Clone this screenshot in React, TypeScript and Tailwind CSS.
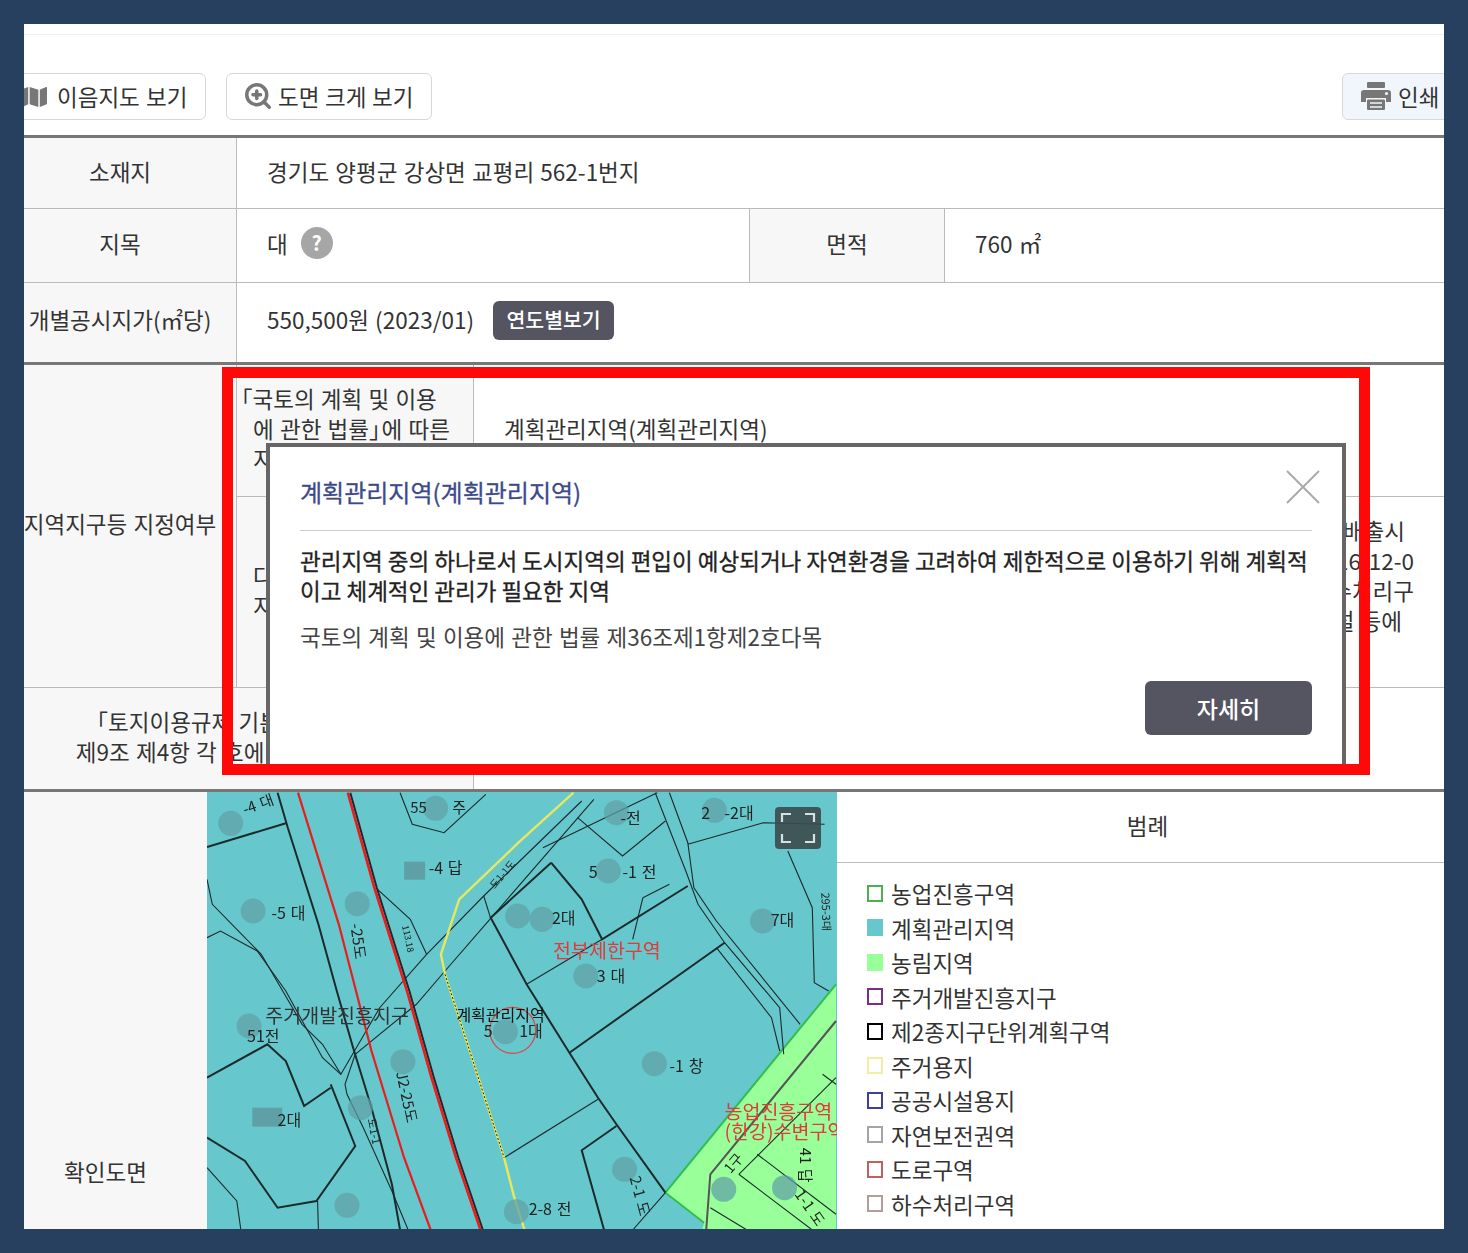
import React from "react";
import { FaMap } from "react-icons/fa";
import { ZoomIn } from "lucide-react";

const X = (z: number) => (z - 17) / 2.45;
const Y = (z: number) => (z - 3) / 3;
const pts = (a: number[]) => {
  const out: string[] = [];
  for (let i = 0; i < a.length; i += 2) out.push(`${X(a[i]).toFixed(1)},${Y(a[i + 1]).toFixed(1)}`);
  return out.join(" ");
};

const thin: number[][] = [
  [490, 5, 520, 100, 598, 125, 700, 10],
  [935, 30, 695, 315, 555, 490, 440, 650, 345, 850, 300, 760, 250, 700, 150, 490, 30, 340, 17, 265],
  [965, 25, 712, 382, 600, 540, 530, 640, 380, 790, 355, 880, 360, 910, 400, 1010, 470, 1200, 510, 1317],
  [695, 315, 712, 382],
  [800, 580, 985, 445],
  [925, 80, 1035, 195, 1140, 90],
  [840, 170, 1120, 5],
  [1195, 160, 1380, 95, 1530, 100],
  [1115, 5, 1190, 240, 1220, 340, 1285, 455, 1420, 650, 1430, 790],
  [1150, 5, 1195, 155, 1210, 290, 1265, 390, 1470, 700],
  [1265, 470, 1400, 680, 1420, 780],
  [1440, 180, 1500, 350, 1505, 575, 1540, 600],
  [430, 290, 515, 385, 555, 490],
  [975, 925, 745, 1100],
  [1085, 320, 1060, 445],
  [1085, 320, 1150, 280],
  [1140, 1205, 1060, 1317],
  [288, 1230, 290, 1317],
  [17, 440, 50, 420, 140, 480, 210, 600, 300, 800, 345, 850],
  [17, 1130, 90, 1230, 100, 1317],
  [1320, 1150, 1500, 1317],
  [1365, 1090, 1558, 1270],
  [1558, 860, 1320, 1150],
  [1525, 850, 1558, 880],
  [1250, 1250, 1340, 1317],
];
const thick: number[][] = [
  [17, 168, 210, 97],
  [190, 5, 215, 110, 290, 400, 335, 600, 375, 770, 420, 950, 470, 1180, 490, 1317],
  [860, 215, 712, 380, 800, 580, 905, 785, 975, 920, 1020, 1000, 1140, 1205],
  [860, 215, 935, 325, 985, 445, 1195, 285],
  [905, 785, 1285, 455],
  [1020, 1005, 935, 1078, 990, 1317],
  [17, 860, 165, 760, 210, 810, 255, 945, 320, 890],
  [320, 880, 380, 1065, 285, 1230, 190, 1250, 110, 1110, 17, 1040],
  [368, 5, 433, 290, 513, 600, 573, 860, 633, 1100, 693, 1317],
];
const blobs: [number, number][] = [
  [75, 97], [577, 52], [1020, 65], [1260, 58], [1000, 240], [130, 360], [385, 338], [778, 375], [838, 385],
  [1378, 390], [945, 555], [748, 722], [120, 705], [497, 812], [1113, 818], [393, 950], [1040, 1135],
  [1283, 1195], [1432, 1190], [775, 1262], [360, 1243],
];
const labels: [string, number, number, number, number, string][] = [
  ["-4 대", 110, 72, 15, -20, "#222"],
  ["55", 515, 66, 15, 0, "#222"],
  ["주", 618, 66, 15, 0, "#222"],
  ["-전", 1030, 98, 16, 0, "#222"],
  ["2", 1228, 85, 16, 0, "#222"],
  ["-2대", 1285, 85, 16, 0, "#222"],
  ["-4 답", 560, 250, 16, 0, "#222"],
  ["5", 952, 262, 16, 0, "#222"],
  ["-1 전", 1035, 262, 16, 0, "#222"],
  ["-5 대", 175, 385, 16, 0, "#222"],
  ["2대", 862, 398, 16, 0, "#222"],
  ["7대", 1398, 405, 16, 0, "#222"],
  ["3 대", 972, 572, 16, 0, "#222"],
  ["51전", 115, 752, 16, 0, "#222"],
  ["5", 695, 738, 16, 0, "#222"],
  ["1대", 782, 738, 16, 0, "#222"],
  ["-1 창", 1150, 842, 16, 0, "#222"],
  ["2대", 190, 1005, 16, 0, "#222"],
  ["2-8 전", 805, 1272, 16, 0, "#222"],
  ["-25도", 368, 400, 15, 82, "#222"],
  ["J2-25도", 480, 845, 15, 78, "#222"],
  ["113.18", 495, 405, 9, 78, "#222"],
  ["도1-1도", 722, 295, 10, -50, "#222"],
  ["295-3대", 1522, 305, 11, 88, "#222"],
  ["2-1 도", 1052, 1160, 15, 75, "#222"],
  ["41 답", 1470, 1070, 15, 90, "#222"],
  ["1-1 도", 1455, 1210, 15, 55, "#222"],
  ["1구", 1300, 1150, 14, -50, "#222"],
  ["도1-1", 410, 985, 11, 78, "#222"],
  ["전부제한구역", 865, 500, 19.5, 0, "#e03a3a"],
  ["주거개발진흥지구", 160, 695, 19.5, 0, "#333"],
  ["계획관리지역", 628, 690, 16, 0, "#111"],
  ["농업진흥구역", 1285, 985, 19.5, 0, "#e03a3a"],
  ["(한강)수변구역", 1285, 1045, 19.5, 0, "#e03a3a"],
];

function MapDrawing() {
  return (
    <svg width="630" height="438" viewBox="0 0 630 438" className="block blur-[0.4px]">
      <rect width="630" height="438" fill="#66c8cc" />
      <polygon points={pts([1558, 580, 1140, 1205, 1235, 1295, 1230, 1317, 1558, 1317])} fill="#99ff99" />
      <polyline points={pts([1558, 580, 1140, 1205, 1235, 1295])} fill="none" stroke="#2fbf4a" strokeWidth="2" />
      {thin.map((p, i) => (
        <polyline key={i} points={pts(p)} fill="none" stroke="#1c2a2c" strokeWidth="1.1" />
      ))}
      {thick.map((p, i) => (
        <polyline key={i} points={pts(p)} fill="none" stroke="#1c2a2c" strokeWidth="2" />
      ))}
      <polyline points={pts([240, 5, 340, 400, 420, 780, 500, 1100, 565, 1317])} fill="none" stroke="#e81e1e" strokeWidth="2.2" />
      <polyline points={pts([362, 5, 427, 290, 507, 600, 567, 860, 627, 1100, 687, 1317])} fill="none" stroke="#e81e1e" strokeWidth="2.6" />
      <polyline points={pts([915, 5, 780, 155, 635, 325, 590, 490, 600, 550, 745, 1100, 770, 1220, 795, 1317])} fill="none" stroke="#e8e860" strokeWidth="2.4" />
      <polyline points={pts([600, 550, 745, 1100])} fill="none" stroke="#222" strokeWidth="1" strokeDasharray="2 2" />
      <polyline points={pts([1558, 690, 1250, 1150, 1240, 1317])} fill="none" stroke="#555" strokeWidth="2" />
      <rect x={X(500)} y={Y(212)} width="21" height="18" fill="#5fa0a6" />
      <rect x={X(128)} y={Y(950)} width="30" height="19" fill="#5fa0a6" />
      {blobs.map(([x, y], i) => (
        <circle key={i} cx={X(x)} cy={Y(y)} r="12.5" fill="#5fa0a6" fillOpacity="0.72" />
      ))}
      <circle cx={X(766)} cy={Y(718)} r="23" fill="none" stroke="#d84848" strokeWidth="1.3" />
      {labels.map(([t, x, y, s, r, c], i) => (
        <text
          key={i}
          x={X(x)}
          y={Y(y)}
          fontSize={s}
          fill={c}
          transform={r ? `rotate(${r} ${X(x)} ${Y(y)})` : undefined}
        >
          {t}
        </text>
      ))}
    </svg>
  );
}

function PrinterIcon() {
  return (
    <svg width="30" height="28" viewBox="0 0 30 28" className="shrink-0">
      <rect x="6" y="0" width="18" height="6" rx="1" fill="#777" />
      <path d="M3 8H27A3 3 0 0 1 30 11V20H25V16H5V20H0V11A3 3 0 0 1 3 8Z" fill="#777" />
      <circle cx="25.5" cy="11.5" r="1.6" fill="#f1f6fc" />
      <rect x="6" y="17.5" width="18" height="10.5" rx="1" fill="#777" />
      <path d="M9 21H21M9 25H21" stroke="#f1f6fc" strokeWidth="1.5" />
    </svg>
  );
}

const legend: [string, string][] = [
  ["농업진흥구역", "border-2 border-[#4caf50]"],
  ["계획관리지역", "bg-[#66c8cc]"],
  ["농림지역", "bg-[#99ff99]"],
  ["주거개발진흥지구", "border-2 border-[#7b2d8b]"],
  ["제2종지구단위계획구역", "border-2 border-black"],
  ["주거용지", "border-2 border-[#f3eea0]"],
  ["공공시설용지", "border-2 border-[#3a3fa0]"],
  ["자연보전권역", "border-2 border-[#a5a5a5]"],
  ["도로구역", "border-2 border-[#c06060]"],
  ["하수처리구역", "border-2 border-[#b39c9c]"],
];

export default function App() {
  return (
    <div className="font-['Noto_Sans_CJK_KR',sans-serif] relative h-[1253px] bg-[#27405f] p-6 text-[22.5px] leading-[30px] text-[#333] [word-spacing:1.2px]">
      <div className="h-[1205px] overflow-hidden bg-white">
        <div className="h-[11px] border-b border-[#eeeeee]" />

        <div className="mt-[38px] flex h-[47px] items-center gap-5">
          <div className="ml-[-12px] flex h-[47px] w-[194px] items-center gap-[10px] rounded-md border border-[#d8d8d8] pb-[2px] pl-2">
            <FaMap className="mt-[2px] h-[26px] w-[26px] text-[#777]" />
            <span>이음지도 보기</span>
          </div>
          <div className="flex h-[47px] w-[206px] items-center gap-[5px] rounded-md border border-[#d8d8d8] pb-[2px] pl-[16px]">
            <ZoomIn className="h-[30px] w-[30px] text-[#777]" strokeWidth={2.8} />
            <span className="[word-spacing:0.6px]">도면 크게 보기</span>
          </div>
          <div className="ml-auto mr-[-30px] flex h-[47px] w-[132px] items-center gap-[7px] rounded-md border border-[#d8d8d8] bg-[#f1f6fc] pb-[2px] pl-[18px]">
            <PrinterIcon />
            <span>인쇄</span>
          </div>
        </div>

        <div className="mt-[15px] border-t-[3px] border-[#777]">
          <div className="flex h-[71px] border-b border-[#bbb]">
            <div className="flex w-[213px] shrink-0 items-center justify-center border-r border-[#bbb] bg-[#f7f7f7] pb-[5px] pr-5">소재지</div>
            <div className="flex items-center pb-[5px] pl-[30px]">경기도 양평군 강상면 교평리 562-1번지</div>
          </div>
          <div className="flex h-[74px] border-b border-[#bbb]">
            <div className="flex w-[213px] shrink-0 items-center justify-center border-r border-[#bbb] bg-[#f7f7f7] pb-[6px] pr-5">지목</div>
            <div className="flex w-[512px] shrink-0 items-center gap-[13px] pb-[6px] pl-[30px]">
              <span>대</span>
              <span className="flex h-8 w-8 items-center justify-center rounded-full bg-[#a6a6a6] text-[20px] font-bold text-white">?</span>
            </div>
            <div className="flex w-[196px] shrink-0 items-center justify-center border-x border-[#bbb] bg-[#f7f7f7] pb-[6px]">면적</div>
            <div className="flex items-center pb-[6px] pl-[30px]">760 ㎡</div>
          </div>
          <div className="flex h-[82px] border-b-[3px] border-[#777]">
            <div className="flex w-[213px] shrink-0 items-center justify-center overflow-hidden whitespace-nowrap border-r border-[#bbb] bg-[#f7f7f7] pb-2 pr-5">개별공시지가(㎡당)</div>
            <div className="flex items-center gap-[19px] pb-1 pl-[30px]">
              <span className="mb-1">550,500원 (2023/01)</span>
              <span className="flex h-[39px] w-[121px] items-center justify-center rounded-md bg-[#555561] pb-[3px] text-[20.5px] font-medium text-white">연도별보기</span>
            </div>
          </div>

          <div className="flex h-[323px] border-b border-[#bbb]">
            <div className="flex w-[213px] shrink-0 items-center justify-center whitespace-nowrap border-r border-[#bbb] bg-[#f7f7f7] pb-[6px] pr-5">지역지구등 지정여부</div>
            <div className="flex min-w-0 flex-1 flex-col">
              <div className="flex h-[132px] border-b border-[#bbb]">
                <div className="flex w-[237px] shrink-0 items-center whitespace-nowrap border-r border-[#bbb] bg-[#f7f7f7] pb-[6px] pl-[16px]">
                  <div>
                    <span className="ml-[-23px]">「국토의 계획 및 이용</span>
                    <br />
                    에 관한 법률<span className="tracking-[-10px]">」</span>에 따른
                    <br />
                    지역ㆍ지구등
                  </div>
                </div>
                <div className="flex items-center pb-[6px] pl-[30px]">계획관리지역(계획관리지역)</div>
              </div>
              <div className="flex min-h-0 flex-1">
                <div className="flex w-[237px] shrink-0 items-center whitespace-nowrap border-r border-[#bbb] bg-[#f7f7f7] pb-1 pl-4">
                  <div>
                    다른 법령 등에 따른
                    <br />
                    지역ㆍ지구등
                  </div>
                </div>
                <div className="flex flex-1 flex-col items-end justify-center pb-[35px]">
                  <div className="mr-[39px]">폐수배출시</div>
                  <div className="mr-[30px]">2016-12-0</div>
                  <div className="mr-[30px]">하수처리구</div>
                  <div className="mr-[42px]">시설 등에</div>
                </div>
              </div>
            </div>
          </div>

          <div className="flex h-[104px] border-b-[3px] border-[#777]">
            <div className="flex w-[450px] shrink-0 items-center justify-center whitespace-nowrap border-r border-[#bbb] bg-[#f7f7f7] pb-[6px] pr-5 text-center">
              <div>
                「토지이용규제 기본법 시행령」
                <br />
                제9조 제4항 각 호에 해당되는 사항
              </div>
            </div>
          </div>

          <div className="flex h-[760px]">
            <div className="flex w-[183px] shrink-0 items-center justify-center bg-[#f7f7f7] pb-[2px] pr-5">확인도면</div>
            <div className="relative h-[438px] w-[630px] shrink-0 overflow-hidden">
              <MapDrawing />
              <div className="absolute left-[568px] top-[15px] flex h-[42px] w-[46px] items-center justify-center rounded bg-[#3b4a4d]/90">
                <svg width="36" height="32" viewBox="0 0 36 32" fill="none" stroke="#d8dfe0" strokeWidth="2.2">
                  <path d="M2 10V2H11M25 2H34V10M34 22V30H25M11 30H2V22" />
                </svg>
              </div>
            </div>
            <div className="flex-1">
              <div className="flex h-[71px] items-center justify-center border-b border-[#bbb] pb-[5px] pl-[14px]">범례</div>
              <div className="flex flex-col gap-[4.5px] pl-[30px] pt-[15px]">
                {legend.map(([t, c]) => (
                  <div key={t} className="flex h-[30px] items-center gap-2">
                    <span className={`h-[17px] w-[16px] shrink-0 ${c}`} />
                    <span>{t}</span>
                  </div>
                ))}
              </div>
            </div>
          </div>
        </div>
      </div>

      <div className="absolute left-[266px] top-[443px] h-[327px] w-[1080px] border-4 border-[#666] bg-white px-[30px]">
        <div className="flex h-[84px] items-center border-b border-[#ccc] text-[#3c4a8a]">
          <span className="mt-[6px] text-[24px] [-webkit-text-stroke:0.3px_#3c4a8a]">계획관리지역(계획관리지역)</span>
        </div>
        <svg className="absolute right-[22px] top-[23px]" width="34" height="34" viewBox="0 0 34 34" stroke="#aaa" strokeWidth="2" fill="none">
          <path d="M1 1L33 33M33 1L1 33" />
        </svg>
        <p className="mt-[14px] text-[#222] [-webkit-text-stroke:0.3px_#222] [word-spacing:0px]">관리지역 중의 하나로서 도시지역의 편입이 예상되거나 자연환경을 고려하여 제한적으로 이용하기 위해 계획적이고 체계적인 관리가 필요한 지역</p>
        <p className="mt-4 text-[#444]">국토의 계획 및 이용에 관한 법률 제36조제1항제2호다목</p>
        <div className="ml-auto mt-[30px] flex h-[54px] w-[167px] items-center justify-center rounded-md bg-[#555561] text-[23px] font-medium text-white">자세히</div>
      </div>

      <div className="pointer-events-none absolute left-[222px] top-[367px] h-[408px] w-[1148px] border-[11px] border-[#fe0808]" />
    </div>
  );
}
